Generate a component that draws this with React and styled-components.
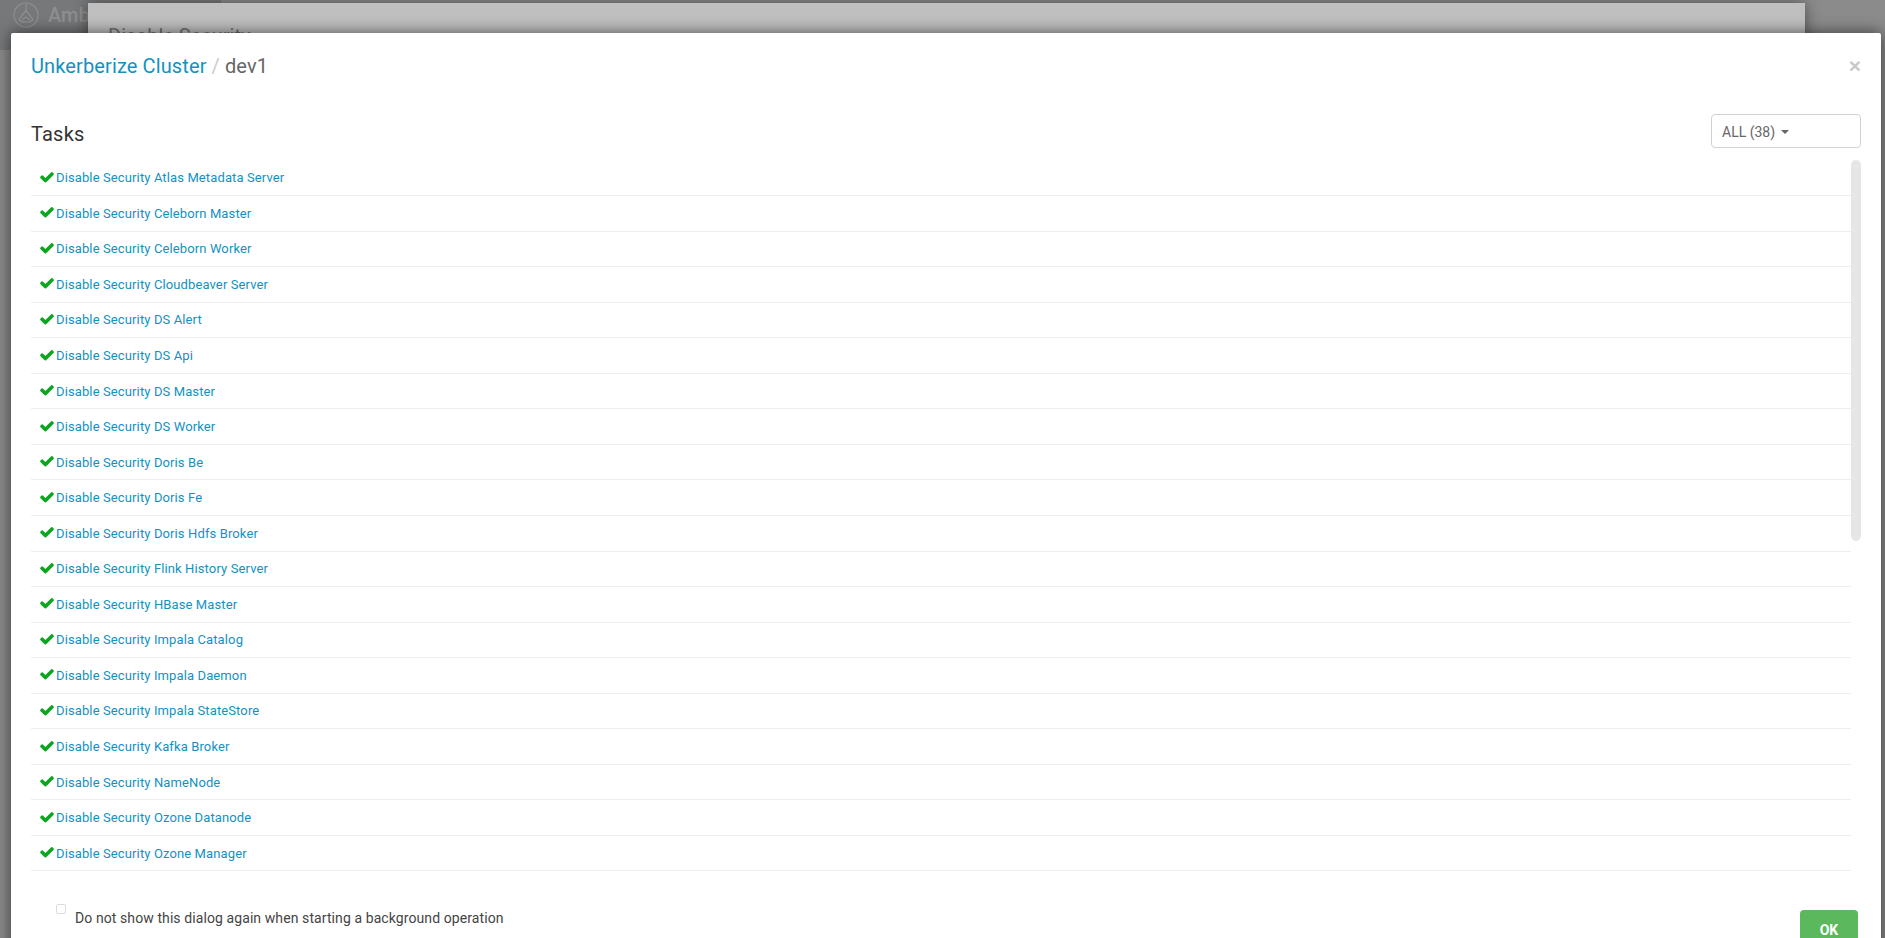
import React from "react";
import styled, { createGlobalStyle } from "styled-components";

const Global = createGlobalStyle`
  html, body { margin: 0; padding: 0; height: 100%; overflow: hidden; background: #8b8b8b; }
  * { box-sizing: border-box; }
`;

const FONT = `Roboto, "Liberation Sans", Arial, sans-serif`;

const Page = styled.div`
  position: relative;
  width: 100%;
  height: 938px;
  overflow: hidden;
  background: #8b8b8b;
  font-family: ${FONT};
`;

const TopStrip = styled.div`
  display: flex;
  align-items: center;
  gap: 9px;
  width: 221px;
  height: 50px;
  padding: 0 0 20px 13px;
  background: #77787a;
  color: #8e8f91;
`;

const BrandName = styled.span`
  font-size: 20px;
  font-weight: 500;
`;

const BackDialog = styled.div`
  position: absolute;
  left: 88px;
  top: 3px;
  width: 1717px;
  height: 200px;
  padding: 21px 20px;
  background: #bfbfbf;
  box-shadow: 0 0 14px rgba(0, 0, 0, 0.45);
  color: #6f6f6f;
  font-size: 20px;
`;

const Dialog = styled.div`
  position: absolute;
  left: 11px;
  top: 33px;
  width: 1870px;
  height: 960px;
  display: flex;
  flex-direction: column;
  background: #fff;
  border-radius: 2px;
  box-shadow: 0 0 16px rgba(0, 0, 0, 0.6);
`;

const Header = styled.div`
  display: flex;
  align-items: center;
  justify-content: space-between;
  height: 66px;
  padding: 0 20px;
`;

const Title = styled.div`
  font-size: 20px;
  line-height: 66px;
  letter-spacing: 0.12px;
  color: #666;
  white-space: nowrap;
`;

const TitleLink = styled.span`
  color: #1491c1;
`;

const Slash = styled.span`
  color: #ccc;
  padding: 0 5px;
`;

const Close = styled.span`
  font-family: "Liberation Sans", Arial, sans-serif;
  font-size: 21px;
  font-weight: 700;
  line-height: 1;
  margin-top: -2px;
  color: #c9c9c9;
`;

const Body = styled.div`
  display: flex;
  flex-direction: column;
  padding: 15px 20px 0;
`;

const TasksBar = styled.div`
  display: flex;
  align-items: flex-start;
  justify-content: space-between;
  height: 34px;
`;

const TasksTitle = styled.div`
  margin-top: 6px;
  font-size: 20px;
  line-height: 28px;
  letter-spacing: 0.2px;
  color: #333;
`;

const Filter = styled.div`
  display: flex;
  align-items: center;
  gap: 6px;
  width: 150px;
  height: 34px;
  padding: 1px 10px 0;
  border: 1px solid #cfd3d7;
  border-radius: 4px;
  font-size: 14px;
  color: #666;
`;

const Caret = styled.span`
  width: 0;
  height: 0;
  border-left: 4px solid transparent;
  border-right: 4px solid transparent;
  border-top: 4px solid #666;
`;

const ScrollArea = styled.div`
  position: relative;
  margin-top: 12.5px;
  padding-right: 10px;
`;

const Thumb = styled.div`
  position: absolute;
  top: -1px;
  right: 0;
  width: 10px;
  height: 381px;
  border-radius: 5px;
  background: #e6e6e6;
`;

const Row = styled.div`
  display: flex;
  align-items: center;
  gap: 1px;
  height: 35.55px;
  padding-left: 8px;
  border-bottom: 1px solid #eee;
  font-size: 13px;
  color: #1491c1;
  letter-spacing: 0.12px;
`;

const CheckSvg = styled.svg`
  width: 16px;
  height: 16px;
  margin-top: -2px;
  fill: #0ca51f;
`;

const Footer = styled.div`
  display: flex;
  justify-content: space-between;
  align-items: flex-start;
  padding: 32px 3px 0 22px;
`;

const CheckWrap = styled.div`
  display: flex;
  align-items: flex-start;
  gap: 9px;
  margin-left: 3px;
`;

const Box = styled.span`
  width: 10px;
  height: 10px;
  margin-top: 1px;
  border: 1px solid #ddd;
  border-radius: 2px;
`;

const CheckLabel = styled.span`
  margin-top: 6px;
  font-size: 14px;
  line-height: 18px;
  letter-spacing: 0.09px;
  color: #444;
`;

const OkButton = styled.button`
  width: 58px;
  height: 40px;
  margin-top: 7px;
  border: 0;
  border-radius: 4px;
  background: #5cb85c;
  color: #fff;
  font-family: ${FONT};
  font-size: 14px;
  font-weight: 700;
`;

const Check = () => (
  <CheckSvg viewBox="0 0 1792 1792" aria-hidden="true">
    <path d="M1671 566q0 40-28 68l-724 724-136 136q-28 28-68 28t-68-28l-136-136-362-362q-28-28-28-68t28-68l136-136q28-28 68-28t68 28l294 295 656-657q28-28 68-28t68 28l136 136q28 28 28 68z" />
  </CheckSvg>
);

const Logo = () => (
  <svg width="26" height="26" viewBox="0 0 26 26" fill="none" stroke="#8e8f91" strokeWidth="1.2" aria-hidden="true">
    <circle cx="13" cy="13" r="12" />
    <path d="M13 2 L13 8 M13 8 C11 12 8 14 6 18 C9 21 17 21 20 18 C18 14 15 12 13 8 Z" />
    <path d="M9 18 L13 15 L17 18" />
  </svg>
);

const TASKS = [
  "Atlas Metadata Server", "Celeborn Master", "Celeborn Worker", "Cloudbeaver Server",
  "DS Alert", "DS Api", "DS Master", "DS Worker", "Doris Be", "Doris Fe", "Doris Hdfs Broker",
  "Flink History Server", "HBase Master", "Impala Catalog", "Impala Daemon", "Impala StateStore",
  "Kafka Broker", "NameNode", "Ozone Datanode", "Ozone Manager",
];

export default function App() {
  return (
    <Page>
      <Global />
      <TopStrip>
        <Logo />
        <BrandName>Ambari</BrandName>
      </TopStrip>
      <BackDialog>Disable Security</BackDialog>
      <Dialog>
        <Header>
          <Title>
            <TitleLink>Unkerberize Cluster</TitleLink>
            <Slash>/</Slash>
            dev1
          </Title>
          <Close>×</Close>
        </Header>
        <Body>
          <TasksBar>
            <TasksTitle>Tasks</TasksTitle>
            <Filter>
              ALL (38)
              <Caret />
            </Filter>
          </TasksBar>
          <ScrollArea>
            <Thumb />
            {TASKS.map((t) => (
              <Row key={t}>
                <Check />
                <span>Disable Security {t}</span>
              </Row>
            ))}
          </ScrollArea>
          <Footer>
            <CheckWrap>
              <Box />
              <CheckLabel>Do not show this dialog again when starting a background operation</CheckLabel>
            </CheckWrap>
            <OkButton>OK</OkButton>
          </Footer>
        </Body>
      </Dialog>
    </Page>
  );
}
